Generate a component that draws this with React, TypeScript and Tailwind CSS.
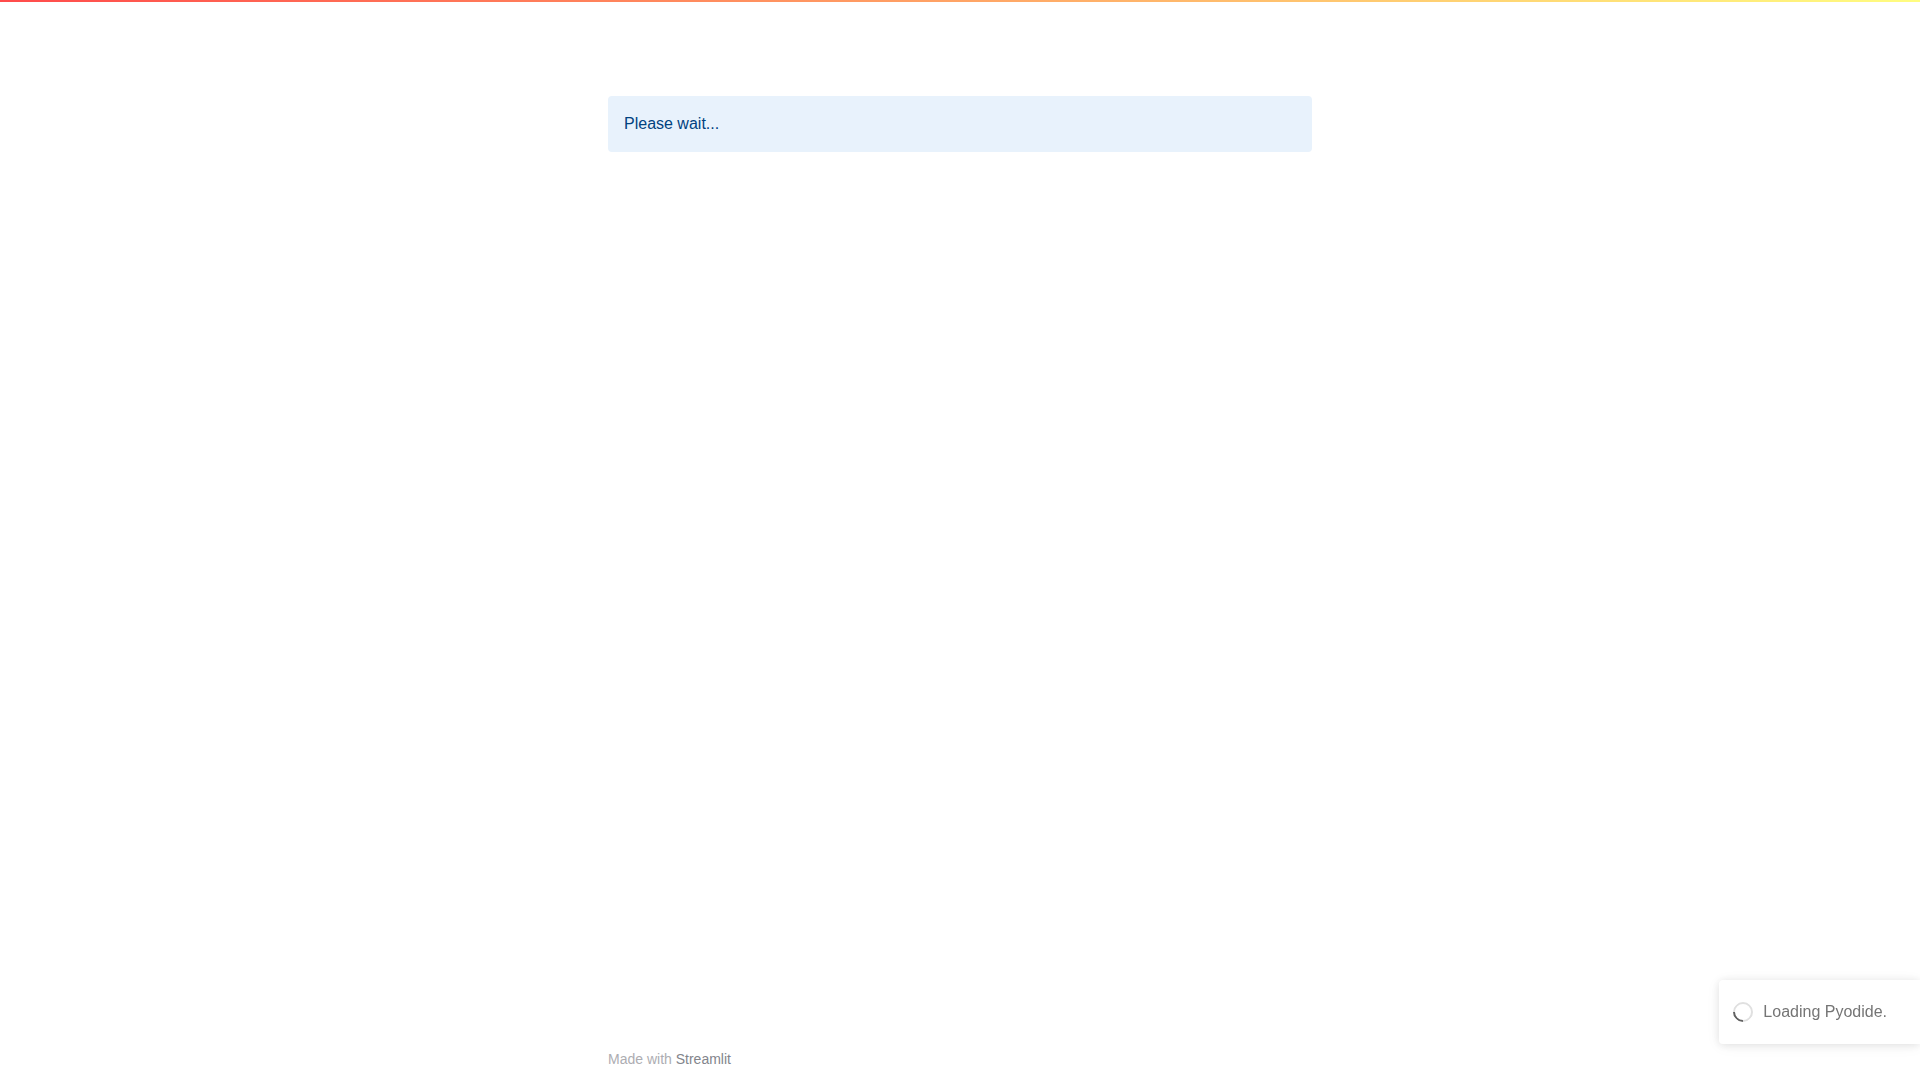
export default function App() {
  return (
    <div className="flex min-h-screen flex-col bg-white font-['Liberation_Sans',Arial,sans-serif] text-base text-[#31333f]">
      <div className="h-0.5 w-full bg-[linear-gradient(90deg,#ff4b4b,#fffd80)]" />
      <main className="mx-auto w-full max-w-[736px] flex-1 px-4 pt-[94px]">
        <div role="alert" className="rounded bg-[#e8f2fc] p-4 leading-6 text-[#004280]">
          Please wait...
        </div>
      </main>
      <footer className="mx-auto w-full max-w-[736px] px-4 pb-[11px] text-sm leading-5 text-[#adadb2]">
        Made with{" "}
        <a href="https://streamlit.io" className="text-[#83858c]">
          Streamlit
        </a>
      </footer>
      <div
        role="status"
        className="fixed right-0 bottom-9 flex h-16 items-center gap-2.5 rounded-l bg-white pr-[33px] pl-3.5 text-[#757575] shadow-[0_1px_10px_0_rgba(0,0,0,0.1),0_2px_15px_0_rgba(0,0,0,0.05)]"
      >
        <div className="size-5 rotate-45 rounded-full border-2 border-[#e0e0e0] border-b-[#616161]" />
        <span className="leading-6">Loading Pyodide.</span>
      </div>
    </div>
  );
}
